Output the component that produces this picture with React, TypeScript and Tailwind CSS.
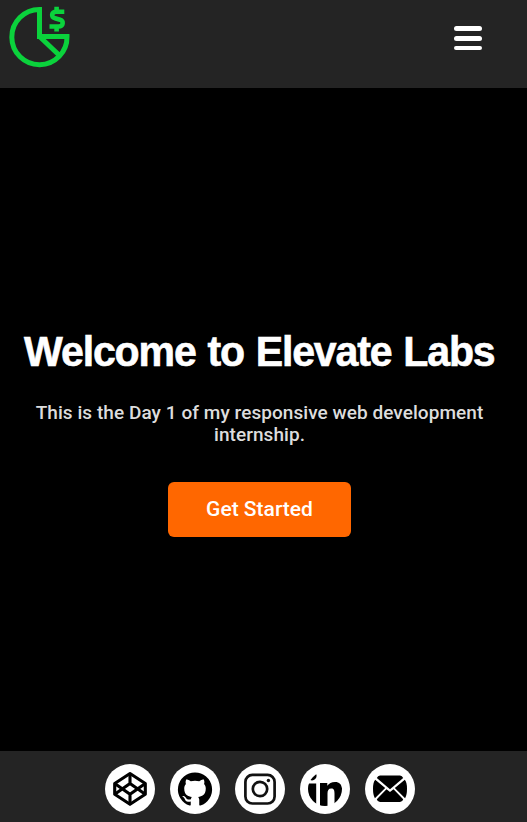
import React from "react";

function Logo() {
  return (
    <svg width="80" height="80" viewBox="0 0 80 80" fill="none" stroke="#0bd23c" strokeWidth="5" aria-label="Logo">
      <path d="M39.5 9.5A27.6 27.6 0 1 0 67 36.5H39.5Z" />
      <path d="M39.5 36.5L59 55" />
      <path d="M64.3 11.7H56.5C51 11.7 51 17.3 55 18.2L60 19.7C64 21.2 63.5 26.5 58.5 26.5H49.5M56.6 6.8V11M56.6 27V31.5" strokeWidth="4.6" />
    </svg>
  );
}

function CodePenIcon() {
  return (
    <svg width="50" height="50" viewBox="0 0 50 50" fill="none" stroke="#000" strokeWidth="3.1" strokeLinejoin="round">
      <path d="M25 9.5L40.3 19.5V30.2L25 40.3L9.7 30.2V19.5Z" />
      <path d="M9.7 19.5L25 30.2L40.3 19.5M9.7 30.2L25 19.5L40.3 30.2M25 9.5V19.5M25 30.2V40.3" />
    </svg>
  );
}

function GitHubIcon() {
  return (
    <svg width="50" height="50" viewBox="0 0 50 50">
      <g transform="translate(8 8) scale(1.4167)">
        <path d="M12 .3a12 12 0 0 0-3.8 23.4c.6.1.8-.3.8-.6v-2.2c-3.3.7-4-1.4-4-1.4-.6-1.4-1.4-1.8-1.4-1.8-1-.7.1-.7.1-.7 1.2.1 1.9 1.2 1.9 1.2 1 1.8 2.8 1.3 3.5 1 .1-.8.4-1.3.7-1.6-2.6-.3-5.4-1.3-5.4-5.9 0-1.3.4-2.4 1.2-3.2-.1-.3-.5-1.5.1-3.1 0 0 1-.3 3.3 1.2a11.3 11.3 0 0 1 6 0C17.3 5.1 18.3 5.4 18.3 5.4c.6 1.6.2 2.8.1 3.1.8.8 1.2 1.9 1.2 3.2 0 4.6-2.8 5.6-5.4 5.9.4.4.8 1.1.8 2.2v3.3c0 .3.2.7.8.6A12 12 0 0 0 12 .3Z" />
      </g>
    </svg>
  );
}

function InstagramIcon() {
  return (
    <svg width="50" height="50" viewBox="0 0 50 50" fill="none" stroke="#111" strokeWidth="2.7">
      <rect x="10.4" y="10.9" width="29.2" height="28.6" rx="7" />
      <circle cx="25" cy="25" r="7.2" />
      <circle cx="33.4" cy="16.5" r="1.7" fill="#111" stroke="none" />
    </svg>
  );
}

function LinkedInIcon() {
  return (
    <svg width="50" height="50" viewBox="0 0 50 50">
      <clipPath id="round">
        <circle cx="25" cy="25" r="17" />
      </clipPath>
      <g clipPath="url(#round)">
        <circle cx="12" cy="11.8" r="4.6" />
        <path d="M8 19.5H16.2V42H8ZM20 19H27.3V21.8C29 19.5 31.5 18 35 18C41 18 42.3 22.3 42.3 28V42H34.5V29.5C34.5 26.5 34 24.5 31.2 24.5C28.4 24.5 27.5 26.5 27.5 29.5V42H20Z" />
      </g>
    </svg>
  );
}

function MailIcon() {
  return (
    <svg width="50" height="50" viewBox="0 0 50 50">
      <path d="M15 11.5H35Q37.2 11.5 38.2 14L25 25.2L11.8 14Q12.8 11.5 15 11.5Z" />
      <path d="M10.2 15.7L20.2 24L9.9 34.2Q8 31 8 24.7Q8 18 10.2 15.7ZM39.8 15.7L29.8 24L40.1 34.2Q42 31 42 24.7Q42 18 39.8 15.7Z" />
      <path d="M21.5 25.2L25 28.1L28.5 25.2L38.2 35.2Q37.5 38 35 38H15Q12.5 38 11.8 35.2Z" />
    </svg>
  );
}

const links = [
  { name: "CodePen", Icon: CodePenIcon },
  { name: "GitHub", Icon: GitHubIcon },
  { name: "Instagram", Icon: InstagramIcon },
  { name: "LinkedIn", Icon: LinkedInIcon },
  { name: "Email", Icon: MailIcon },
];

export default function App() {
  return (
    <div className="flex h-screen min-h-[822px] flex-col overflow-hidden bg-black font-['Liberation_Sans',sans-serif] text-white">
      <header className="flex h-[88px] shrink-0 items-start justify-between bg-[#242424] pr-[45px]">
        <Logo />
        <button aria-label="Menu" className="mt-[26px] flex w-7 flex-col gap-[5px]">
          <span className="h-[5px] rounded-full bg-white" />
          <span className="h-[5px] rounded-full bg-white" />
          <span className="h-[4px] rounded-full bg-white" />
        </button>
      </header>
      <main className="flex flex-1 flex-col items-center pr-2 pt-[237px]">
        <h1 className="scale-x-[.955] whitespace-nowrap text-[43px] leading-[52px] font-bold tracking-[-1.2px] [word-spacing:1.6px] [-webkit-text-stroke:0.6px_white]">
          Welcome to Elevate Labs
        </h1>
        <p className="mt-[25px] text-center font-['Roboto',sans-serif] text-[19px] leading-[22px] font-medium tracking-[0.06px] text-[#ddd]">
          This is the Day 1 of my responsive web development
          <br />
          internship.
        </p>
        <button className="mt-9 h-[55px] w-[183px] rounded-md bg-[#ff6700] font-['Roboto',sans-serif] text-[21px] font-medium">
          Get Started
        </button>
      </main>
      <footer className="flex h-[71px] shrink-0 items-start justify-center gap-[15px] bg-[#242424] pr-[7px] pt-[13px]">
        {links.map(({ name, Icon }) => (
          <a key={name} href="#" aria-label={name} className="size-[50px] rounded-full bg-white">
            <Icon />
          </a>
        ))}
      </footer>
    </div>
  );
}
